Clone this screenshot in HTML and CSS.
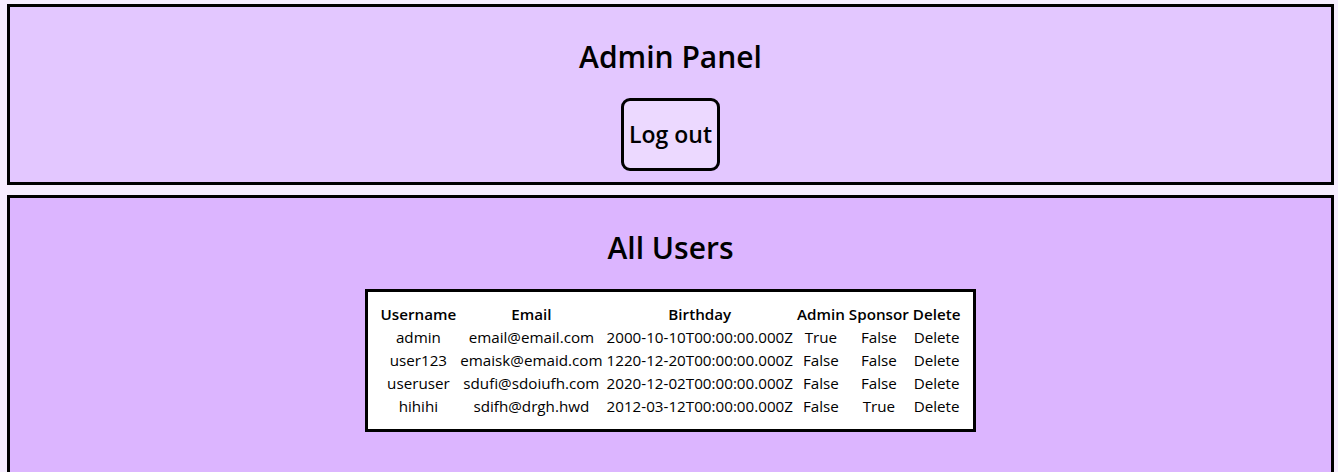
FILE: index.html
```html
<!DOCTYPE html>
<html lang="en">
<head>
<meta charset="utf-8">
<title>Admin Panel</title>
<link rel="stylesheet" href="styles.css">
</head>
<body>
<section class="panel panel-header">
  <h1 class="title">Admin Panel</h1>
  <button class="logout" type="button">Log out</button>
</section>
<section class="panel panel-users">
  <h1 class="title">All Users</h1>
  <table class="users">
    <thead>
      <tr><th>Username</th><th>Email</th><th>Birthday</th><th>Admin</th><th>Sponsor</th><th>Delete</th></tr>
    </thead>
    <tbody>
      <tr><td>admin</td><td>email@email.com</td><td>2000-10-10T00:00:00.000Z</td><td>True</td><td>False</td><td>Delete</td></tr>
      <tr><td>user123</td><td>emaisk@emaid.com</td><td>1220-12-20T00:00:00.000Z</td><td>False</td><td>False</td><td>Delete</td></tr>
      <tr><td>useruser</td><td>sdufi@sdoiufh.com</td><td>2020-12-02T00:00:00.000Z</td><td>False</td><td>False</td><td>Delete</td></tr>
      <tr><td>hihihi</td><td>sdifh@drgh.hwd</td><td>2012-03-12T00:00:00.000Z</td><td>False</td><td>True</td><td>Delete</td></tr>
    </tbody>
  </table>
</section>
</body>
</html>
```

FILE: styles.css
```css
html, body {
  margin: 0;
  background: #f6edff;
}
body {
  padding: 4px 4px 0 7px;
  font-family: "Open Sans", "Noto Sans", sans-serif;
  color: #000;
}
.panel {
  border: 3px solid #000;
  display: flex;
  flex-direction: column;
  align-items: center;
}
.panel-header {
  background: #e3c7ff;
  padding-bottom: 11px;
  margin-bottom: 10px;
}
.panel-users {
  background: #dcb5ff;
  padding-bottom: 60px;
}
.title {
  font-size: 30px;
  font-weight: 600;
  line-height: 38px;
  margin: 31px 0 22px;
}
.logout {
  font-family: inherit;
  font-size: 23px;
  font-weight: 600;
  line-height: 31px;
  padding: 18px 5px 18px;
  border: 3px solid #000;
  border-radius: 9px;
  background: #ecd9ff;
  color: #000;
}
.users {
  background: #fff;
  border: 3px solid #000;
  padding: 10px;
  font-size: 15.2px;
  line-height: 19px;
  border-spacing: 2px;
}
.users th, .users td {
  padding: 1px;
  text-align: center;
  white-space: nowrap;
}
.users th {
  font-weight: 600;
}
```
